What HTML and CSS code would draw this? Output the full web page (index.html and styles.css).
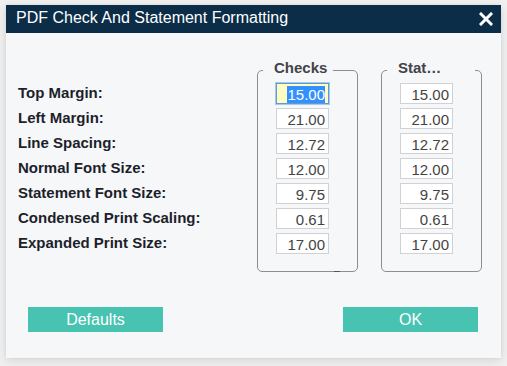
FILE: index.html
```html
<!DOCTYPE html>
<html>
<head>
<meta charset="utf-8">
<title>PDF Check And Statement Formatting</title>
<link rel="stylesheet" href="styles.css">
</head>
<body>
<div class="dialog">
  <div class="titlebar">
    <span class="title">PDF Check And Statement Formatting</span>
    <svg class="close" width="14" height="14" viewBox="0 0 14 14" aria-label="Close">
      <path d="M2 2 L12 12 M12 2 L2 12" stroke="#ffffff" stroke-width="3" stroke-linecap="square" fill="none"/>
    </svg>
  </div>
  <div class="content">
    <div class="labels">
      <div class="label">Top Margin:</div>
      <div class="label">Left Margin:</div>
      <div class="label">Line Spacing:</div>
      <div class="label">Normal Font Size:</div>
      <div class="label">Statement Font Size:</div>
      <div class="label">Condensed Print Scaling:</div>
      <div class="label">Expanded Print Size:</div>
    </div>
    <fieldset class="group group-checks">
      <legend class="group-title">Checks</legend>
      <div class="fields">
        <div class="field field-focused"><span class="selected">15.00</span></div>
        <div class="field">21.00</div>
        <div class="field">12.72</div>
        <div class="field">12.00</div>
        <div class="field">9.75</div>
        <div class="field">0.61</div>
        <div class="field">17.00</div>
      </div>
    </fieldset>
    <fieldset class="group group-stat">
      <legend class="group-title group-title-trunc">Stat…</legend>
      <div class="fields">
        <div class="field">15.00</div>
        <div class="field">21.00</div>
        <div class="field">12.72</div>
        <div class="field">12.00</div>
        <div class="field">9.75</div>
        <div class="field">0.61</div>
        <div class="field">17.00</div>
      </div>
    </fieldset>
  </div>
  <div class="actions">
    <button class="btn">Defaults</button>
    <button class="btn">OK</button>
  </div>
</div>
</body>
</html>
```

FILE: styles.css
```css
* {
  box-sizing: border-box;
}

html, body {
  margin: 0;
  padding: 0;
}

body {
  background: #f0f0f1;
  font-family: "Liberation Sans", Arial, sans-serif;
  width: 507px;
  height: 366px;
  overflow: hidden;
  padding: 5px 6px 0 6px;
}

.dialog {
  width: 495px;
  height: 353px;
  background: #f6f7f9;
  box-shadow: 0 3px 10px rgba(0, 0, 0, 0.10), 0 0 4px rgba(0, 0, 0, 0.06);
  display: flex;
  flex-direction: column;
}

.titlebar {
  height: 28px;
  background: #0b2d48;
  display: flex;
  align-items: flex-start;
  justify-content: space-between;
  padding: 0 8px 0 10px;
}

.title {
  color: #ffffff;
  font-size: 16px;
  line-height: 26px;
}

.close {
  margin-top: 7px;
  display: block;
}

.content {
  display: flex;
  align-items: flex-start;
  padding: 28px 0 0 12px;
}

.labels {
  width: 239px;
  padding-top: 19px;
  display: flex;
  flex-direction: column;
}

.label {
  height: 25px;
  line-height: 25px;
  font-size: 15px;
  font-weight: bold;
  color: #1d1f2b;
  white-space: nowrap;
}

.group {
  position: relative;
  width: 101px;
  margin: 0;
  padding: 4px 0 17px 5px;
  border: 1px solid #8e8e8e;
  border-radius: 5px;
  min-width: 0;
}

.group-stat {
  margin-left: 23px;
}

.group-checks::after {
  content: "";
  position: absolute;
  left: 76px;
  bottom: -1px;
  width: 6px;
  height: 1px;
  background: #555;
}

.group-title {
  margin: 0;
  padding: 0 6px 4px 11px;
  font-size: 15px;
  font-weight: bold;
  line-height: 14px;
  color: #444448;
}

.group-title-trunc {
  padding-right: 34px;
}

.fields {
  padding-left: 13px;
  display: flex;
  flex-direction: column;
  gap: 4px;
}

.field {
  width: 53px;
  height: 21px;
  background: #ffffff;
  border: 1px solid #cfd1d4;
  padding: 2px 3px 0 0;
  line-height: 17px;
  font-size: 15px;
  color: #444;
  text-align: right;
  white-space: nowrap;
}

.field-focused {
  background: #ffffc4;
  border: 1px solid #5d9ad6;
  box-shadow: 0 0 0 1px #a9c9ea;
}

.selected {
  background: #3390ff;
  color: #ffffff;
}

.actions {
  display: flex;
  justify-content: space-between;
  padding: 0 23px 0 22px;
  margin-top: 35px;
}

.btn {
  width: 135px;
  height: 25px;
  border: none;
  border-radius: 0;
  background: #48c3b1;
  color: #ffffff;
  font-family: "Liberation Sans", Arial, sans-serif;
  font-size: 16px;
  line-height: 25px;
  padding: 0;
  cursor: pointer;
}
```
